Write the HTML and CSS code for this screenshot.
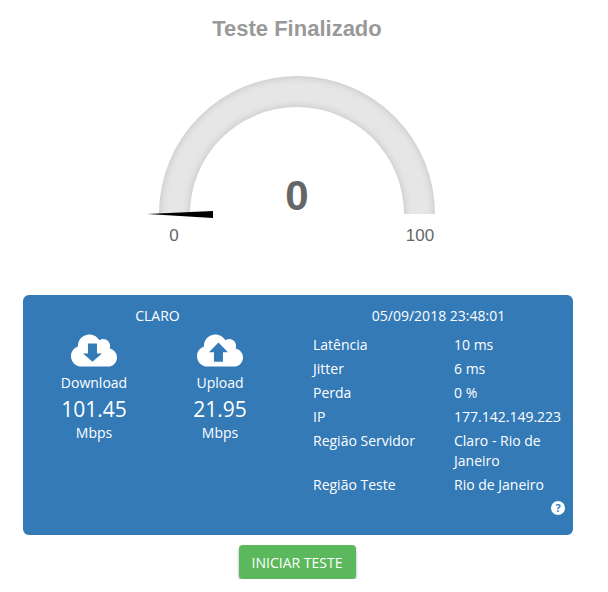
FILE: index.html
```html
<!DOCTYPE html>
<html lang="en">
<head>
    <meta charset="UTF-8">
    <meta name="viewport" content="width=device-width, initial-scale=1.0">
    <title>Teste Finalizado</title>
    <link rel="stylesheet" href="styles.css">
</head>
<body>
    <div class="container">
        <h1 class="title">Teste Finalizado</h1>

        <!-- Gauge -->
        <svg class="gauge" width="320" height="200" viewBox="0 0 320 200">
            <defs>
                <filter id="inset" x="-5%" y="-5%" width="110%" height="110%">
                    <feGaussianBlur in="SourceAlpha" stdDeviation="4" result="blur"/>
                    <feComposite in="SourceAlpha" in2="blur" operator="out" result="edge"/>
                    <feFlood flood-color="#000" flood-opacity="0.36"/>
                    <feComposite in2="edge" operator="in" result="shade"/>
                    <feMerge>
                        <feMergeNode in="SourceGraphic"/>
                        <feMergeNode in="shade"/>
                    </feMerge>
                </filter>
                <clipPath id="gauge-clip">
                    <rect x="0" y="0" width="320" height="163"/>
                </clipPath>
            </defs>
            <g clip-path="url(#gauge-clip)">
                <path class="gauge-track" filter="url(#inset)" d="M22 163A138 138 0 0 1 298 163V180H267V163A107 107 0 0 0 53 163V180H22Z"/>
            </g>
            <polygon class="gauge-needle" points="10,163 76,160 76,167"/>
            <text class="gauge-value" x="160" y="159">0</text>
            <text class="gauge-label" x="37" y="190">0</text>
            <text class="gauge-label" x="283" y="190">100</text>
        </svg>

        <!-- Result panel -->
        <div class="panel">
            <div class="panel-col">
                <div class="panel-head">CLARO</div>
                <div class="speeds">
                    <div class="speed">
                        <svg class="cloud" width="46" height="33" viewBox="0 32 640 448">
                            <path fill-rule="evenodd" d="M537.6 226.6c4.1-10.7 6.4-22.4 6.4-34.6 0-53-43-96-96-96-19.7 0-38.1 6-53.3 16.2C367 64.2 315.3 32 256 32c-88.4 0-160 71.6-160 160 0 2.7.1 5.4.2 8.1C40.2 219.8 0 273.2 0 336c0 79.5 64.5 144 144 144h368c70.7 0 128-57.3 128-128 0-61.9-44-113.6-102.4-125.4zM236 157h125v139h69L299 412 167 296h69z"/>
                        </svg>
                        <div>Download</div>
                        <div class="speed-value">101.45</div>
                        <div>Mbps</div>
                    </div>
                    <div class="speed">
                        <svg class="cloud" width="46" height="33" viewBox="0 32 640 448">
                            <path fill-rule="evenodd" d="M537.6 226.6c4.1-10.7 6.4-22.4 6.4-34.6 0-53-43-96-96-96-19.7 0-38.1 6-53.3 16.2C367 64.2 315.3 32 256 32c-88.4 0-160 71.6-160 160 0 2.7.1 5.4.2 8.1C40.2 219.8 0 273.2 0 336c0 79.5 64.5 144 144 144h368c70.7 0 128-57.3 128-128 0-61.9-44-113.6-102.4-125.4zM236 412h125V282h69L299 143 167 282h69z"/>
                        </svg>
                        <div>Upload</div>
                        <div class="speed-value">21.95</div>
                        <div>Mbps</div>
                    </div>
                </div>
            </div>
            <div class="panel-col">
                <div class="panel-head">05/09/2018 23:48:01</div>
                <table class="details">
                    <tr><td class="details-label">Latência</td><td>10 ms</td></tr>
                    <tr><td class="details-label">Jitter</td><td>6 ms</td></tr>
                    <tr><td class="details-label">Perda</td><td>0 %</td></tr>
                    <tr><td class="details-label">IP</td><td>177.142.149.223</td></tr>
                    <tr><td class="details-label">Região Servidor</td><td>Claro - Rio de Janeiro</td></tr>
                    <tr><td class="details-label">Região Teste</td><td>Rio de Janeiro</td></tr>
                </table>
                <div class="help-row"><span class="help">?</span></div>
            </div>
        </div>

        <button class="start-button">INICIAR TESTE</button>
    </div>
</body>
</html>
```

FILE: styles.css
```css
body {
    margin: 0;
    padding: 0;
    background: #fff;
    font-family: "Open Sans", sans-serif;
    font-size: 14px;
    line-height: 20px;
    color: #fff;
}

.container {
    width: 550px;
    margin-left: 23px;
    display: flex;
    flex-direction: column;
    align-items: center;
}

.title {
    margin: 16px 2px 0 0;
    font-family: "Liberation Sans", Arial, sans-serif;
    font-size: 22px;
    line-height: 26px;
    font-weight: bold;
    color: #999;
}

.gauge {
    display: block;
    margin: 9px 3px 0 0;
    flex: none;
}

.gauge-track {
    fill: #e6e6e6;
}

.gauge-needle {
    fill: #000;
}

.gauge-value {
    font-family: "Liberation Sans", Arial, sans-serif;
    font-size: 42px;
    font-weight: bold;
    fill: #666;
    text-anchor: middle;
}

.gauge-label {
    font-family: "Liberation Sans", Arial, sans-serif;
    font-size: 17px;
    fill: #666;
    text-anchor: middle;
}

.panel {
    box-sizing: border-box;
    width: 100%;
    height: 240px;
    margin-top: 44px;
    padding-top: 11px;
    display: grid;
    grid-template-columns: 269px 269px;
    column-gap: 12px;
    background: #337ab7;
    border-radius: 6px;
}

.panel-col {
    padding: 0 8px;
}

.panel-head {
    margin-bottom: 7px;
    text-align: center;
}

.speeds {
    display: flex;
}

.speed {
    width: 126px;
    text-align: center;
}

.cloud {
    display: block;
    margin: 1px auto 6px;
    fill: #fff;
}

.speed-value {
    margin: 3px 0 1px;
    font-size: 21px;
    line-height: 26px;
}

.details {
    width: 253px;
    margin-left: 1px;
    border-collapse: collapse;
    table-layout: fixed;
}

.details td {
    padding: 2px 0;
    vertical-align: top;
}

.details-label {
    width: 141px;
}

.help-row {
    display: flex;
    justify-content: flex-end;
    margin-top: 4px;
}

.help {
    width: 14px;
    height: 14px;
    border-radius: 50%;
    background: #fff;
    color: #337ab7;
    font-size: 11px;
    font-weight: bold;
    line-height: 14px;
    text-align: center;
}

.start-button {
    width: 117px;
    height: 34px;
    margin: 10px 2px 0 0;
    padding: 0;
    border: 0;
    border-radius: 4px;
    background-color: #5cb85c;
    box-shadow: 0 2px 3px rgba(0, 0, 0, 0.35);
    color: #fff;
    font-family: "Open Sans", sans-serif;
    font-size: 14px;
    cursor: pointer;
}
```
